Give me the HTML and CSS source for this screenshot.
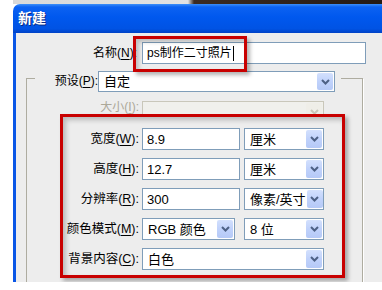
FILE: index.html
```html
<!DOCTYPE html>
<html lang="zh-CN">
<head>
  <meta charset="UTF-8">
  <meta name="viewport" content="width=device-width, initial-scale=1.0">
  <title>新建</title>
  <link rel="stylesheet" href="styles.css">
</head>
<body>
  <div class="top-strip"></div>

  <div class="window">
    <div class="titlebar">新建</div>

    <div class="dialog">
      <div class="row name-row">
        <label class="label name-label">名称(<u>N</u>):</label>
        <div class="field name-field">ps制作二寸照片<span class="caret"></span></div>
        <div class="mark mark-name"></div>
      </div>

      <fieldset class="group">
        <legend class="preset">
          <span class="label preset-label">预设(<u>P</u>):</span>
          <div class="combo preset-combo">
            <span class="value">自定</span>
            <span class="drop"><svg width="9" height="6" viewBox="0 0 9 6"><path d="M1 1 L4.5 4.5 L8 1" /></svg></span>
          </div>
        </legend>

        <div class="row size-row">
          <span class="label size-label">大小(<u>I</u>):</span>
          <div class="combo disabled size-combo">
            <span class="value"></span>
            <span class="drop"><svg width="9" height="6" viewBox="0 0 9 6"><path d="M1 1 L4.5 4.5 L8 1" /></svg></span>
          </div>
        </div>

        <div class="mark-box">
          <div class="row">
            <label class="label">宽度(<u>W</u>):</label>
            <div class="field num">8.9</div>
            <div class="combo unit">
              <span class="value">厘米</span>
              <span class="drop"><svg width="9" height="6" viewBox="0 0 9 6"><path d="M1 1 L4.5 4.5 L8 1" /></svg></span>
            </div>
          </div>

          <div class="row">
            <label class="label">高度(<u>H</u>):</label>
            <div class="field num">12.7</div>
            <div class="combo unit">
              <span class="value">厘米</span>
              <span class="drop"><svg width="9" height="6" viewBox="0 0 9 6"><path d="M1 1 L4.5 4.5 L8 1" /></svg></span>
            </div>
          </div>

          <div class="row">
            <label class="label">分辨率(<u>R</u>):</label>
            <div class="field num">300</div>
            <div class="combo unit">
              <span class="value">像素/英寸</span>
              <span class="drop"><svg width="9" height="6" viewBox="0 0 9 6"><path d="M1 1 L4.5 4.5 L8 1" /></svg></span>
            </div>
          </div>

          <div class="row">
            <label class="label">颜色模式(<u>M</u>):</label>
            <div class="combo mode">
              <span class="value">RGB 颜色</span>
              <span class="drop"><svg width="9" height="6" viewBox="0 0 9 6"><path d="M1 1 L4.5 4.5 L8 1" /></svg></span>
            </div>
            <div class="combo unit bits">
              <span class="value">8 位</span>
              <span class="drop"><svg width="9" height="6" viewBox="0 0 9 6"><path d="M1 1 L4.5 4.5 L8 1" /></svg></span>
            </div>
          </div>

          <div class="row bg-row">
            <label class="label">背景内容(<u>C</u>):</label>
            <div class="combo wide">
              <span class="value">白色</span>
              <span class="drop"><svg width="9" height="6" viewBox="0 0 9 6"><path d="M1 1 L4.5 4.5 L8 1" /></svg></span>
            </div>
          </div>
        </div>
      </fieldset>
    </div>
  </div>
</body>
</html>
```

FILE: styles.css
```css
:root {
  --xp-blue: #0a56e6;
  --face: #ededed;
  --edit-border: #7f9db9;
  --mark: #c80000;
}

* {
  box-sizing: border-box;
}

body {
  margin: 0;
  width: 382px;
  height: 290px;
  overflow: hidden;
  background: #fff;
  font-family: "Liberation Sans", "Noto Sans CJK SC", sans-serif;
  font-size: 12px;
  line-height: 15px;
  color: #000;
}

.top-strip {
  height: 4px;
  background: linear-gradient(to right, #fff 13px, #d9d9d9 13px, #e2e2e2 188px, #3b2b22 194px, #241a14);
}

.window {
  margin-left: 13px;
}

.titlebar {
  height: 29px;
  padding-left: 5px;
  border-top-left-radius: 7px;
  background: linear-gradient(#3d8ff8 0, #0c62f2 3px, #0058ee 45%, #0053e4 85%, #0042c6 100%);
  color: #fff;
  font-weight: bold;
  font-size: 14px;
  line-height: 29px;
  text-shadow: 1px 1px 0 #0a2a80;
}

.dialog {
  height: 249px;
  overflow: hidden;
  border-left: 3px solid var(--xp-blue);
  background: var(--face);
}

/* rows */

.row {
  display: flex;
  align-items: center;
}

.label {
  flex: none;
  text-align: right;
  margin-right: 3px;
  white-space: nowrap;
}

.label u {
  text-decoration-thickness: 1px;
  text-underline-offset: 2px;
}

.field,
.combo {
  height: 22px;
  border: 1px solid var(--edit-border);
  background: #fff;
  font-size: 13px;
}

.field {
  padding-left: 4px;
  display: flex;
  align-items: center;
}

.combo {
  display: flex;
  align-items: stretch;
}

.combo .value {
  flex: 1;
  padding-left: 5px;
  align-self: center;
  white-space: nowrap;
}

.drop {
  flex: none;
  width: 16px;
  margin: 1px;
  border-radius: 2px;
  background: linear-gradient(#d3e0fd, #c0d2fb 50%, #b5c9f7);
  display: flex;
  align-items: center;
  justify-content: center;
}

.drop path {
  fill: none;
  stroke: #4d6185;
  stroke-width: 2;
}

/* name */

.name-row {
  position: relative;
  margin-top: 9px;
}

.name-label {
  width: 121px;
  margin-right: 5px;
}

.name-field {
  width: 224px;
  font-size: 12px;
}

.caret {
  display: inline-block;
  width: 1px;
  height: 15px;
  margin-left: 1px;
  background: #000;
}

.mark {
  position: absolute;
  border: 3px solid var(--mark);
  box-shadow: 3px 3px 4px rgba(0, 0, 0, 0.3), inset 3px 3px 4px rgba(0, 0, 0, 0.2);
  pointer-events: none;
}

.mark-name {
  left: 117px;
  top: -6px;
  width: 114px;
  height: 36px;
}

/* group */

.group {
  margin: 0 19px 0 10px;
  padding: 9px 0 20px 8px;
  border: 1px solid #aeaca0;
  box-shadow: 1px 1px 0 #fff;
  min-width: 0;
}

.preset {
  display: flex;
  align-items: center;
  padding: 7px 6px 0 13px;
}

.preset-label {
  width: 50px;
  margin-right: 0;
}

.preset-combo {
  width: 237px;
  height: 21px;
}

.size-row {
  height: 13px;
  overflow: hidden;
  align-items: flex-start;
}

.size-label {
  width: 104px;
  line-height: 13px;
  color: #aca899;
}

.size-combo {
  width: 182px;
  height: 21px;
  flex: none;
}

.combo.disabled {
  border-color: #c9c7ba;
  background: #f0f0ec;
}

.combo.disabled .drop {
  background: #efeee8;
}

.combo.disabled .drop path {
  stroke: #c9c7ba;
}

/* marked box */

.mark-box {
  margin-left: 25px;
  width: 285px;
  padding: 11px 0 5px;
  border: 3px solid var(--mark);
  box-shadow: 3px 3px 4px rgba(0, 0, 0, 0.3), inset 3px 3px 5px rgba(0, 0, 0, 0.22);
}

.mark-box .row + .row {
  margin-top: 8px;
}

.mark-box .bg-row {
  margin-top: 6px;
}

.mark-box .label {
  width: 76px;
  font-size: 12.5px;
}

.num {
  width: 98px;
}

.unit {
  width: 80px;
  margin-left: 4px;
}

.mode {
  width: 93px;
}

.bits {
  margin-left: 9px;
}

.wide {
  width: 182px;
}
```
